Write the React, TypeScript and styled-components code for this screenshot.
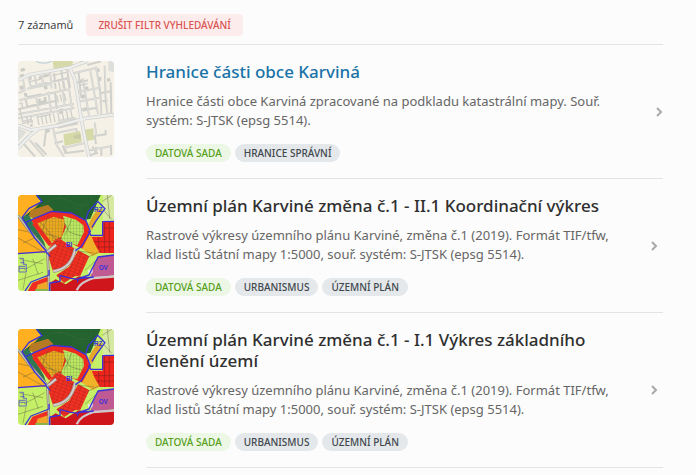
import React from 'react';
import styled, { createGlobalStyle } from 'styled-components';

const GlobalStyle = createGlobalStyle`
  * { box-sizing: border-box; }
  body {
    margin: 0;
    background: #fcfcfc;
    color: #333;
    font-family: 'Noto Sans', 'Open Sans', sans-serif;
  }
`;

const Page = styled.main`
  padding: 14px 33px 0 18px;
`;

const Toolbar = styled.header`
  display: flex;
  align-items: center;
  gap: 13px;
  padding-bottom: 8px;
  border-bottom: 1px solid #e3e3e3;
`;

const Count = styled.span`
  font-family: 'Open Sans', sans-serif;
  font-size: 11px;
  line-height: 16px;
`;

const ClearButton = styled.button`
  height: 22px;
  padding: 0 12px;
  border: 0;
  border-radius: 4px;
  background: #fdecec;
  color: #d9534f;
  font-family: inherit;
  font-size: 10px;
  font-weight: 500;
  line-height: 22px;
  text-transform: uppercase;
  cursor: pointer;
`;

const List = styled.ul`
  margin: 0;
  padding: 0;
  list-style: none;
`;

const Item = styled.li`
  display: flex;
  gap: 32px;
  padding-top: 16px;
`;

const Thumb = styled.svg`
  flex: none;
  width: 96px;
  height: 96px;
  border-radius: 4px;
`;

const Body = styled.div`
  flex: 1;
  min-width: 0;
  display: flex;
  align-items: center;
  padding-bottom: 16px;
  border-bottom: 1px solid #e3e3e3;
`;

const Content = styled.div`
  flex: 1;
  min-width: 0;
`;

const Title = styled.h2`
  margin: 0;
  font-size: 17px;
  font-weight: 500;
  line-height: 21px;
`;

const TitleLink = styled.a<{ $active?: boolean }>`
  color: ${(p) => (p.$active ? '#1a73a7' : '#2f2f2f')};
  text-decoration: none;
`;

const Description = styled.p`
  margin: 10px 0 14px;
  color: #666;
  font-size: 13px;
  line-height: 19px;
`;

const Tags = styled.div`
  display: flex;
  flex-wrap: wrap;
  gap: 4px;
`;

const Tag = styled.span<{ $kind?: 'dataset' }>`
  height: 18px;
  padding: 0 9px;
  border-radius: 9px;
  background: ${(p) => (p.$kind ? '#edf7e6' : '#e4e8ea')};
  color: ${(p) => (p.$kind ? '#57a01b' : '#40474d')};
  font-size: 10px;
  font-weight: 500;
  line-height: 18px;
  text-transform: uppercase;
`;

const Arrow = styled.svg<{ $active?: boolean }>`
  flex: none;
  width: 7px;
  height: 10px;
  margin-left: 24px;
  margin-right: ${(p) => (p.$active ? 0 : 5)}px;
  fill: none;
  stroke: #a9a9a9;
  stroke-width: 2;
`;

function StreetMap() {
  return (
    <Thumb viewBox="24 18 288 288" role="img" aria-label="Mapa ulic">
      <rect x="24" y="18" width="288" height="288" fill="#f5f1e6" />
      <path d="M128 18h60v19l-56 11z" fill="#d6d9a8" />
      <path d="M208 18h28l-25 9z" fill="#e3dcbc" />
      <path d="M160 238l50-10 6 33-52 12zM222 224l28-4 2 34-23 4z" fill="#d6d9a8" />
      <path d="M190 242l22-6v16l-20-2z" fill="#c6c9a6" />
      <path d="M24 218l26 13-26 29zM295 18h17v34l-17-4z" fill="#dededb" />
      <path d="M78 18c8 8 34 9 48 0" fill="none" stroke="#b6cbd6" strokeWidth="3" />
      <g fill="#cdcdc8">
        <path d="M30 42l12-4 5 8-12 5zM28 60l12-4 6 10-12 6zM54 65l10-3 1 12-11 2zM86 66l12-3v8l-12 3zM100 59l15-3v9l-15 3zM84 132l8-2v8l9-2v-9l8-2 2 21-8 3v-6l-9 2v6l-8 2zM100 92l9-3 5 12-11 3zM207 75l13-4 3 9-13 4zM224 96l11-2v10l-11 3zM212 121l13-4 3 11-14 3zM263 68l11-3v12l-11 2zM28 94l9-3 5 11-11 4zM41 115l9-2 3 10-9 3zM147 163l11-3 2 15-12 3zM216 160l16-4 3 9-15 5zM59 209l8-2 2 7-8 2zM103 222l14-3 3 11-11 5zM255 42l12-3 3 10-11 5zM290 71l10-3 2 10-9 3zM181 205l19-4 2 7-20 4zM147 211l14-3 2 7-14 4z" />
      </g>
      <g fill="none" stroke="#d0d0cc" strokeWidth="6">
        <path d="M39 72l5 34-18 8M54 64l8 29M74 62l6 31M88 65l32-7M96 60l4 36M120 50l5 50M59 94l121-24M52 101l72-14M28 136l151-34M50 127l44-9M46 129l6 26 32-7M77 121l10 49M24 178l168-32M24 190l170-31M24 163l112-25M115 110l9 63M135 109l5 53M157 102l7 49M177 99l9 61M132 54l5 48M154 47l8 53M171 42l9 57" />
        <path d="M190 55l71-17M195 84l39-8M199 112l67-13M204 140l63-12M210 166l54-8M218 70l19 111M241 47l23 130M258 34l13 78 3 68M284 32l3 105 6 41M232 30l41-11M273 114l28-5M277 139l16-3M206 54l7 73M302 82l2 95" />
        <path d="M128 214l12 56 22 35M136 235l62-13 3 10M133 265l26-6M108 228l-6 46M158 271l9 25M145 198l51-10M140 207l65-14M143 218l61-13M163 278l62-14M163 274l6 20 53-7M59 255l43 50M40 265l35 40M76 263l33 36M254 203l5 39 28-4v-13M254 240l4 27M247 275l16 22M235 286l68-12M236 303l20-8 3-20M303 270v30M274 278v24" />
      </g>
      <g fill="none" stroke="#e6e6e3" strokeWidth="2">
        <path d="M39 72l5 34-18 8M54 64l8 29M74 62l6 31M96 60l4 36M120 50l5 50M59 94l121-24M52 101l72-14M28 136l151-34M77 121l10 49M24 178l168-32M24 190l170-31M115 110l9 63M157 102l7 49M177 99l9 61M190 55l71-17M199 112l67-13M204 140l63-12M218 70l19 111M241 47l23 130M258 34l16 146M284 32l9 146M128 214l12 56 22 35M136 235l62-13M145 198l51-10M163 278l62-14M59 255l43 50M254 203l5 39M235 286l68-12" />
      </g>
      <g fill="none" stroke="#cfcfcb" strokeWidth="4">
        <path d="M82 184l5 26M94 182l5 26M106 180l5 26M118 177l5 26M130 175l5 26M143 172l5 25M156 169l5 25M169 167l5 25M182 165l5 24M146 80l5 25M160 78l5 25M173 75l5 25M140 120l5 22M150 118l5 22M163 116l5 22M50 185l5 24M62 182l5 24" />
        <path d="M29 161l9 38 27-6M35 206l34-8M80 187l44-9M28 147l7-3 3 14M58 80l34-7M128 61l42-9M130 79l43-10M210 91l23-5" />
      </g>
      <g fill="none" stroke="#d0d0ce" strokeWidth="11">
        <path d="M24 76l35-17 123-22 29-11 22-8M178 35l17 40 14 88 13 72 15 71M24 211l38 14 82-13 82-22 86-11M85 223l-24 17-37 40" />
      </g>
      <g fill="none" stroke="#eeeeec" strokeWidth="7">
        <path d="M24 76l35-17 123-22 29-11 22-8M178 35l17 40 14 88 13 72 15 71M24 211l38 14 82-13 82-22 86-11M85 223l-24 17-37 40" />
      </g>
      <path d="M24 270l31-30" fill="none" stroke="#b9ced8" strokeWidth="2" />
    </Thumb>
  );
}

function ZoningPlan() {
  return (
    <Thumb viewBox="24 21 288 288" role="img" aria-label="Výřez územního plánu">
      <defs>
        <pattern id="parcels" width="9" height="10" patternUnits="userSpaceOnUse">
          <path d="M0 0H9M0 0V10" stroke="#514a2a" strokeWidth="1.5" opacity="0.6" />
        </pattern>
        <pattern id="lots" width="14" height="10" patternUnits="userSpaceOnUse" patternTransform="rotate(20)">
          <path d="M0 0H14M0 0V10" stroke="#a3221b" strokeWidth="2" />
        </pattern>
      </defs>
      <rect x="24" y="21" width="288" height="288" fill="#c6ef68" />
      <path d="M74 21h198l-31 71-20 5-36-18-57-10-46-8-26 32-14-8 52-44z" fill="#24632f" />
      <path d="M24 21h53l14 20-14 17-39 30-14-8z" fill="#ffaf20" />
      <path d="M24 89l22 14 37 57 25 28-2 6-82 3z" fill="#ffaf20" />
      <path d="M36 87l21-7 10 21 35 60 8 27-28-28-40-58z" fill="#2f7952" />
      <path d="M62 66l52-16 16 16-8 8-52 18-14-8z" fill="#b67b22" />
      <path d="M279 21h33v80h-34z" fill="#d6e9a0" />
      <path d="M67 101l56-27 62 5 39 23 12 32-24 46-58-27-38 9z" fill="#ef2b20" />
      <path d="M82 106l49-20 36 10-12 50-30 14-10 4z" fill="#eaaa20" />
      <path d="M159 83l39 12 22 17 2 20-20 40-52-14 18-41z" fill="#b9ea62" />
      <path d="M82 106l49-23 67 12 22 17 2 20-20 40-52-20-30 12z" fill="url(#parcels)" />
      <path d="M72 105l50 66" fill="none" stroke="#ef2b20" strokeWidth="13" />
      <path d="M115 184l16-25 20-6 48 32-28 46-41 22-12-38zM205 187l33 18-27 58-17 2-32 20-23-23 38-26z" fill="#f03022" />
      <path d="M115 184l16-25 20-6 48 32-28 46-41 22-12-38zM205 187l33 18-27 58-17 2-32 20-23-23 38-26z" fill="url(#lots)" />
      <path d="M276 100h36v95h-49l-21-49h36z" fill="#ed251d" />
      <path d="M244 161h68M252 177h60M281 120h31M284 104v91M298 103v90M266 149v35" stroke="#8f2020" strokeWidth="2" />
      <path d="M237 126l16 40 16 28-20 10-20-13-12-9 18-45z" fill="#f0b228" />
      <path d="M246 88l17-25 14 2-31 62-12-15z" fill="#e3a52a" />
      <path d="M265 207l47-6v61l-72 9 10-34z" fill="#c05a92" />
      <path d="M137 274l30 15 39-24 42 7 64-6v43H121v-25z" fill="#cf161c" />
      <path d="M53 309l14-25 51-19v44z" fill="#f02d22" />
      <path d="M77 309l6-19 33-11v30z" fill="#eea729" />
      <path d="M76 306h41" stroke="#8cb349" strokeWidth="6" />
      <g fill="none" stroke="#545542" strokeWidth="2" opacity="0.6">
        <path d="M24 150l82 45M24 125l62 13M39 165l55-24M31 215l68 12M42 246l62-34M24 277l75-24M68 212l17 48M48 255l-9 49M178 186l74 9M232 209l43-22M225 247l31-28M163 105l16 28 39 12M185 93l-19 47M118 76l-23 56 63 21M90 101l53 61M277 40l29-19M277 63l28 31M292 21l7 71" />
      </g>
      <g fill="none" stroke="#427146" strokeWidth="2" opacity="0.6">
        <path d="M93 55c25-23 54-34 96-10 28 16 65 7 53-24M154 21c-9 19 19 14 23 3M193 53c5 18 29 10 27-8" />
      </g>
      <path d="M24 83l31 41 57 66 6 119" fill="none" stroke="#888777" strokeWidth="8" />
      <path d="M24 83l31 41 57 66 6 119" fill="none" stroke="#c5c4b4" strokeWidth="4" />
      <path d="M115 190l23-19M130 250c41-7 58-30 66-68" fill="none" stroke="#9a8e88" strokeWidth="10" />
      <path d="M115 190l23-19M130 250c41-7 58-30 66-68" fill="none" stroke="#d5cecd" strokeWidth="6" />
      <path d="M200 307c9-19 23-28 51-37l61-4" fill="none" stroke="#d0c7cc" strokeWidth="7" />
      <path d="M233 247l16-3-2 12-11 2z" fill="#e6e3ed" />
      <path d="M67 101l56-27 62 5 39 23 12 32-24 46" fill="none" stroke="#ef2b20" strokeWidth="10" />
      <g fill="none" stroke="#3a30dc" strokeWidth="4" strokeLinejoin="round">
        <path d="M80 21l16 20-39 20-21 28 39 62 34 38M48 103l26-12 51-21 59 5 44 23 13 32-27 46-18 12M24 197l84-6 12 14M228 93l7-22 28-31 22 22-28 38-11 18M278 101l34-1M278 101v41h-35l-8-13M312 201l-48 6-27 54-32 11-3 11M205 272l46-5M119 285l31-5v-17l33 8 22 3M119 285v24M45 309l18-27 54-21v-15" />
        <path d="M28 211h12v18h9v23H27v-17h19M31 224h13M28 241h18" strokeWidth="2" />
      </g>
      <g fill="#3a30dc" fontFamily="Liberation Sans, sans-serif" fontWeight="700" fontSize="19">
        <text x="168" y="178">BI</text>
        <text x="266" y="245">OV</text>
        <text x="252" y="73">RZ</text>
      </g>
    </Thumb>
  );
}

interface DataRecord {
  title: string;
  text: string;
  tags: string[];
  picture: () => React.JSX.Element;
  active?: boolean;
}

const planText =
  'Rastrové výkresy územního plánu Karviné, změna č.1 (2019). Formát TIF/tfw, klad listů Státní mapy 1:5000, souř. systém: S-JTSK (epsg 5514).';

const records: DataRecord[] = [
  {
    title: 'Hranice části obce Karviná',
    text: 'Hranice části obce Karviná zpracované na podkladu katastrální mapy. Souř. systém: S-JTSK (epsg 5514).',
    tags: ['Hranice správní'],
    picture: StreetMap,
    active: true,
  },
  {
    title: 'Územní plán Karviné změna č.1 - II.1 Koordinační výkres',
    text: planText,
    tags: ['Urbanismus', 'Územní plán'],
    picture: ZoningPlan,
  },
  {
    title: 'Územní plán Karviné změna č.1 - I.1 Výkres základního členění území',
    text: planText,
    tags: ['Urbanismus', 'Územní plán'],
    picture: ZoningPlan,
  },
];

export default function App() {
  return (
    <>
      <GlobalStyle />
      <Page>
        <Toolbar>
          <Count>7 záznamů</Count>
          <ClearButton type="button">Zrušit filtr vyhledávání</ClearButton>
        </Toolbar>
        <List>
          {records.map(({ title, text, tags, picture: Picture, active }) => (
            <Item key={title}>
              <Picture />
              <Body>
                <Content>
                  <Title>
                    <TitleLink href="#" $active={active}>{title}</TitleLink>
                  </Title>
                  <Description>{text}</Description>
                  <Tags>
                    <Tag $kind="dataset">Datová sada</Tag>
                    {tags.map((tag) => (
                      <Tag key={tag}>{tag}</Tag>
                    ))}
                  </Tags>
                </Content>
                <Arrow $active={active} viewBox="0 0 7 10" aria-hidden="true">
                  <path d="M1 1l4 4-4 4" />
                </Arrow>
              </Body>
            </Item>
          ))}
        </List>
      </Page>
    </>
  );
}
